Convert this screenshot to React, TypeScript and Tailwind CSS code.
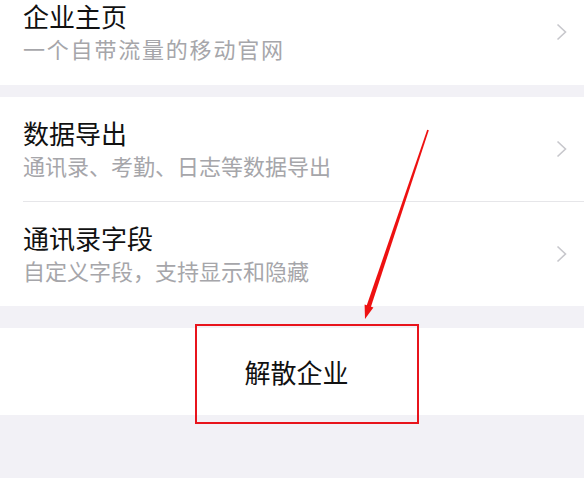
import React from 'react';

const FONT = '"Noto Sans CJK SC", "Noto Sans", sans-serif';

interface Item {
  title: string;
  desc: string;
  wide?: boolean;
}

function Chevron() {
  return (
    <svg width="11" height="18" viewBox="0 0 11 18" className="shrink-0">
      <polyline points="1.5,1.5 9.5,9 1.5,16.5" fill="none" stroke="#c7c7cc" strokeWidth="1.6" />
    </svg>
  );
}

function Row({ item }: { item: Item }) {
  return (
    <div className="h-[104px] flex items-center justify-between pl-[23px] pr-[17px]">
      <div className="flex flex-col">
        <span className="text-[26px] leading-[32px] text-[#111111]">{item.title}</span>
        <span
          className={`text-[22px] leading-[32px] text-[#a6a6aa] ${item.wide ? 'tracking-[1.8px]' : ''}`}
        >
          {item.desc}
        </span>
      </div>
      <Chevron />
    </div>
  );
}

export default function App() {
  return (
    <div className="relative w-full h-[478px] overflow-hidden bg-[#f2f1f6]" style={{ fontFamily: FONT }}>
      <div className="bg-white h-[85px] overflow-hidden">
        <div className="-mt-[20px]">
          <Row item={{ title: '企业主页', desc: '一个自带流量的移动官网', wide: true }} />
        </div>
      </div>

      <div className="bg-white mt-[12px]">
        <Row item={{ title: '数据导出', desc: '通讯录、考勤、日志等数据导出' }} />
        <div className="ml-[23px] border-t border-[#e6e6e9]" />
        <Row item={{ title: '通讯录字段', desc: '自定义字段，支持显示和隐藏' }} />
      </div>

      <div className="bg-white mt-[22px] h-[87px] flex items-center justify-center pl-[9px]">
        <span className="text-[26px] leading-[32px] text-[#111111]">解散企业</span>
      </div>

      {/* annotation overlay */}
      <div className="absolute left-[195px] top-[324px] w-[224px] h-[100px] border-2 border-[#e8141c]" />
      <svg className="absolute inset-0 pointer-events-none" width="584" height="478" viewBox="0 0 584 478">
        <polygon points="428.8,130.3 427.2,129.7 366.6,305.8 370.8,307.2" fill="#ee1111" />
        <polygon points="365,319 373.4,307.6 364.6,304.6" fill="#ee1111" />
      </svg>
    </div>
  );
}
